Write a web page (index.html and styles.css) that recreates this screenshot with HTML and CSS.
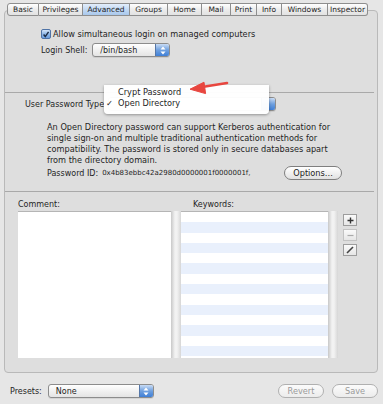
FILE: index.html
```html
<!DOCTYPE html>
<html lang="en">
<head>
  <meta charset="UTF-8" />
  <title>Advanced</title>
  <link rel="stylesheet" href="styles.css">
</head>
<body>
  <div class="window">
    <!-- Tabs -->
    <div class="tabs">
      <span class="tab w-basic">Basic</span>
      <span class="tab w-priv">Privileges</span>
      <span class="tab tab-selected w-adv">Advanced</span>
      <span class="tab w-groups">Groups</span>
      <span class="tab w-home">Home</span>
      <span class="tab w-mail">Mail</span>
      <span class="tab w-print">Print</span>
      <span class="tab w-info">Info</span>
      <span class="tab w-win">Windows</span>
      <span class="tab w-insp">Inspector</span>
    </div>

    <div class="panel">
      <!-- Login -->
      <div class="section-login">
        <div class="check-row">
          <span class="checkbox">
            <svg width="9" height="9" viewBox="0 0 9 9"><path d="M1.8 4.6 L3.7 6.8 L7.4 1.6" fill="none" stroke="#1b2b44" stroke-width="1.6"/></svg>
          </span>
          <span>Allow simultaneous login on managed computers</span>
        </div>
        <div class="shell-row">
          <span>Login Shell:</span>
          <span class="popup popup-shell">
            <span class="popup-text">/bin/bash</span>
            <span class="popup-arrows">
              <svg width="6" height="9" viewBox="0 0 6 9"><path d="M3 0.5 L5.5 3.5 H0.5 Z M3 8.5 L5.5 5.5 H0.5 Z" fill="#fff"/></svg>
            </span>
          </span>
        </div>
      </div>

      <div class="separator"></div>

      <!-- Password -->
      <div class="section-password">
        <div class="type-row">
          <span>User Password Type</span>
          <span class="popup popup-type">
            <span class="popup-text"></span>
            <span class="popup-arrows"></span>
          </span>
          <div class="menu">
            <div class="menu-item">Crypt Password</div>
            <div class="menu-item"><span class="menu-check">✓</span>Open Directory</div>
          </div>
          <svg class="red-arrow" width="42" height="16" viewBox="0 0 42 16">
            <path d="M38 3 L13 7" stroke="#e8463f" stroke-width="2.6" stroke-linecap="round" fill="none"/>
            <path d="M1 9.2 L15 2.2 L16.6 13.6 Z" fill="#e8463f" stroke="#e8463f" stroke-width="1" stroke-linejoin="round"/>
          </svg>
        </div>
        <p class="description">An Open Directory password can support Kerberos authentication for single sign-on and multiple traditional authentication methods for compatibility. The password is stored only in secure databases apart from the directory domain.</p>
        <div class="id-row">
          <span>Password ID:</span>
          <span class="id-value">0x4b83ebbc42a2980d0000001f0000001f,</span>
          <span class="pill-button">Options…</span>
        </div>
      </div>

      <div class="separator"></div>

      <!-- Comment / Keywords -->
      <div class="section-lists">
        <div class="list-labels">
          <span class="label-comment">Comment:</span>
          <span class="label-keywords">Keywords:</span>
        </div>
        <div class="list-row">
          <div class="comment-box"></div>
          <div class="scroller"></div>
          <div class="keyword-list">
            <div class="kw"></div><div class="kw kw-alt"></div>
            <div class="kw"></div><div class="kw kw-alt"></div>
            <div class="kw"></div><div class="kw kw-alt"></div>
            <div class="kw"></div><div class="kw kw-alt"></div>
            <div class="kw"></div><div class="kw kw-alt"></div>
            <div class="kw"></div><div class="kw kw-alt"></div>
            <div class="kw"></div><div class="kw kw-alt"></div>
            <div class="kw"></div>
          </div>
          <div class="scroller"></div>
          <div class="list-buttons">
            <span class="square-button">
              <svg width="7" height="7" viewBox="0 0 7 7"><path d="M3.5 0.5 V6.5 M0.5 3.5 H6.5" stroke="#333" stroke-width="1.4"/></svg>
            </span>
            <span class="square-button square-disabled">
              <svg width="7" height="7" viewBox="0 0 7 7"><path d="M0.5 3.5 H6.5" stroke="#aaa" stroke-width="1.2"/></svg>
            </span>
            <span class="square-button">
              <svg width="8" height="8" viewBox="0 0 8 8"><path d="M1 7 L7 1" stroke="#444" stroke-width="1.6"/></svg>
            </span>
          </div>
        </div>
      </div>
    </div>

    <!-- Bottom bar -->
    <div class="bottom-bar">
      <span>Presets:</span>
      <span class="popup popup-presets">
        <span class="popup-text">None</span>
        <span class="popup-arrows">
          <svg width="6" height="9" viewBox="0 0 6 9"><path d="M3 0.5 L5.5 3.5 H0.5 Z M3 8.5 L5.5 5.5 H0.5 Z" fill="#fff"/></svg>
        </span>
      </span>
      <span class="spacer"></span>
      <span class="pill-button pill-disabled">Revert</span>
      <span class="pill-button pill-disabled">Save</span>
    </div>
  </div>
</body>
</html>
```

FILE: styles.css
```css
* {
  box-sizing: border-box;
}

body {
  margin: 0;
  background: #e6e6e6;
  font-family: "DejaVu Sans", sans-serif;
  font-size: 8px;
  color: #1e1e1e;
}

.window {
  width: 383px;
  height: 404px;
  padding: 3px 5px 0 4px;
}

/* Tabs */
.tabs {
  display: flex;
  height: 13px;
  margin-left: 3px;
  position: relative;
  z-index: 2;
}

.tab {
  display: flex;
  align-items: center;
  justify-content: center;
  height: 13px;
  border: 1px solid #8e8e8e;
  border-left: none;
  background: linear-gradient(#ffffff, #ececec 50%, #e2e2e2);
  font-size: 7.5px;
}

.tab:first-child {
  border-left: 1px solid #8e8e8e;
  border-radius: 3px 0 0 3px;
}

.tab:last-child {
  border-radius: 0 3px 3px 0;
}

.tab-selected {
  background: linear-gradient(#e3eefb, #c3d9f3 50%, #a9c8ec);
}

.w-basic { width: 32px; }
.w-priv { width: 44px; }
.w-adv { width: 47px; }
.w-groups { width: 38px; }
.w-home { width: 34px; }
.w-mail { width: 29px; }
.w-print { width: 26px; }
.w-info { width: 25px; }
.w-win { width: 46px; }
.w-insp { width: 40px; }

/* Panel */
.panel {
  margin-top: -6px;
  height: 363px;
  border: 1px solid #b9b9b9;
  border-radius: 4px;
  background: #dedede;
}

.separator {
  height: 1px;
  background: #a9a9a9;
  margin-right: 3px;
}

.section-login {
  height: 81px;
  padding: 17px 0 0 36px;
}

.check-row {
  display: flex;
  align-items: center;
  gap: 2px;
  height: 12px;
  font-size: 8.2px;
}

.checkbox {
  width: 10px;
  height: 10px;
  border: 1px solid #4f73a6;
  border-radius: 2px;
  background: linear-gradient(#d6e6fa, #8fb6e6 50%, #6d9fe0);
  display: flex;
  align-items: center;
  justify-content: center;
}

.shell-row {
  display: flex;
  align-items: center;
  gap: 5px;
  margin-top: 3px;
  height: 14px;
}

/* Popup buttons */
.popup {
  display: flex;
  height: 14px;
  border: 1px solid #8c8c8c;
  border-radius: 3px;
  background: linear-gradient(#ffffff, #f1f1f1 50%, #e4e4e4);
  overflow: hidden;
  box-shadow: 0 1px 0 rgba(0, 0, 0, 0.08);
}

.popup-text {
  flex: 1;
  display: flex;
  align-items: center;
  padding-left: 7px;
}

.popup-arrows {
  width: 14px;
  display: flex;
  align-items: center;
  justify-content: center;
  background: linear-gradient(#c9dcf5, #6fa0df 50%, #3f7fd6);
  border-left: 1px solid #5577a8;
}

.popup-shell {
  width: 78px;
}

.popup-type {
  width: 168px;
}

.popup-presets {
  width: 106px;
  margin-left: 6px;
}

/* Password section */
.section-password {
  height: 98px;
  padding: 4px 0 0 0;
}

.type-row {
  position: relative;
  display: flex;
  align-items: center;
  gap: 4px;
  height: 14px;
  padding-left: 20px;
}

.menu {
  position: absolute;
  left: 99px;
  top: -12px;
  width: 165px;
  height: 29px;
  padding-top: 2px;
  background: rgba(255, 255, 255, 0.97);
  border-radius: 0 0 4px 4px;
  box-shadow: 0 1px 3px rgba(0, 0, 0, 0.35);
}

.menu-item {
  position: relative;
  height: 11px;
  line-height: 11px;
  padding-left: 14px;
  font-size: 8.2px;
}

.menu-check {
  position: absolute;
  left: 2px;
}

.red-arrow {
  position: absolute;
  left: 184px;
  top: -17px;
}

.description {
  width: 290px;
  margin: 11px 0 0 42px;
  line-height: 11px;
  font-size: 8.2px;
}

.id-row {
  display: flex;
  align-items: center;
  height: 14px;
  padding-left: 42px;
}

.id-value {
  margin-left: 4px;
  font-size: 7px;
  width: 182px;
}

.pill-button {
  display: flex;
  align-items: center;
  justify-content: center;
  height: 14px;
  width: 58px;
  border: 1px solid #7f7f7f;
  border-radius: 7px;
  background: linear-gradient(#ffffff, #f0f0f0 50%, #e1e1e1);
  font-size: 8.2px;
}

/* Lists */
.section-lists {
  padding: 6px 0 0 13px;
}

.list-labels {
  display: flex;
  height: 12px;
  align-items: center;
}

.label-comment {
  width: 175px;
}

.list-row {
  display: flex;
  height: 147px;
  margin-top: 1px;
}

.comment-box {
  width: 153px;
  background: #fff;
  border-top: 1px solid #b5b5b5;
}

.scroller {
  width: 10px;
  background: linear-gradient(to right, #c8c8c8, #f2f2f2 40%, #f2f2f2 60%, #d6d6d6);
}

.keyword-list {
  width: 147px;
  background: #fff;
  border-top: 1px solid #b5b5b5;
  overflow: hidden;
}

.kw {
  height: 10.3px;
}

.kw-alt {
  background: #e9f0fc;
}

.list-buttons {
  display: flex;
  flex-direction: column;
  gap: 3px;
  margin-left: 5px;
  padding-top: 3px;
}

.square-button {
  width: 14px;
  height: 12px;
  display: flex;
  align-items: center;
  justify-content: center;
  border: 1px solid #9d9d9d;
  background: linear-gradient(#fafafa, #e6e6e6);
}

.square-disabled {
  border-color: #c3c3c3;
}

/* Bottom bar */
.bottom-bar {
  display: flex;
  align-items: center;
  height: 34px;
  padding: 2px 0 0 6px;
}

.spacer {
  flex: 1;
}

.pill-disabled {
  width: 46px;
  margin-left: 8px;
  color: #9a9a9a;
  border-color: #b0b0b0;
  background: linear-gradient(#fbfbfb, #ececec);
}
```
